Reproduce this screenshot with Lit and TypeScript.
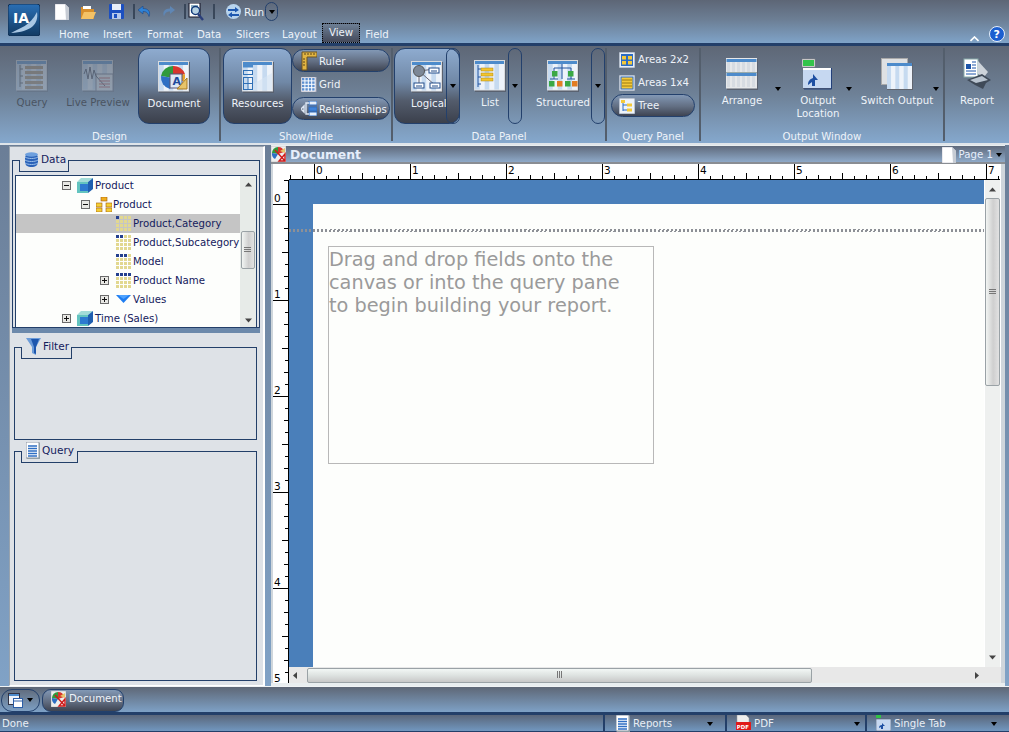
import { LitElement, html, css, svg } from "lit";
import { customElement } from "lit/decorators.js";

const S = (w: number, h: number, body: unknown) =>
  html`<svg width=${w} height=${h} viewBox="0 0 ${w} ${h}" style="display:block;flex:none">${body}</svg>`;

const stripes = (x: number, y: number, w: number, h: number, n = 6) =>
  Array.from({ length: n }, (_, i) =>
    svg`<rect x=${x + (i * w) / n} y=${y} width=${w / n} height=${h} fill=${i % 2 ? "#eef3fa" : "#c6daf0"}/>`);

const win = (inner: unknown = "", sc = true) => S(32, 32, svg`
  <rect x="1" y="1" width="31" height="31" fill="#5a6270"/>
  <rect x="0" y="0" width="31" height="30.5" fill="#d8dadd"/>
  <rect x="1" y="1" width="29" height="28.5" fill="#eef3fa"/>
  ${sc ? stripes(1, 4, 29, 25.5) : ""}
  <rect x="1" y="1" width="29" height="3" fill="#4d8bcb"/>
  ${inner}`);

const icons = {
  query: win(svg`<g stroke="#444" stroke-width="1" fill="none">
    <path d="M4 5v22M4 9h3M4 16h3M4 23h3"/></g>
    ${[6, 11, 16, 21, 26].map((y) => svg`<rect x="9" y=${y} width="18" height="3" fill="#a5845a"/>`)}`),
  live: win(svg`<rect x="14" y="14" width="17" height="17" fill="#eee" stroke="#667"/>
    <path d="M2 14l2-5 2 10 2-12 2 12 2-9 2 6 9 10" stroke="#334" fill="none"/>
    ${[18, 21, 24, 27].map((y) => svg`<path d="M17 ${y}h11" stroke="#b44"/>`)}`),
  document: win(svg`<path d="M15 17 L3 15 A12 12 0 0 1 15 5 Z" fill="#2f9a3c"/>
    <path d="M15 17 V5 A12 12 0 0 1 27 13 Z" fill="#d8352c"/>
    <path d="M15 17 L27 13 A12 12 0 0 1 26 20 L15 20Z" fill="#e8a32a"/>
    <path d="M15 17 L3 15 A12 12 0 0 0 12 28 Z" fill="#2d6fc4"/>
    <rect x="12" y="13" width="12" height="14" fill="#dfe8f5" stroke="#557"/>
    <text x="14.5" y="24" font-size="11" font-weight="700" fill="#224a9a" font-family="Liberation Sans">A</text>
    <path d="M19 28 L29 17 L29 28Z" fill="#e8c46a" stroke="#a8781e"/>`),
  resources: win(svg`<rect x="1" y="4" width="10" height="2.5" fill="#4d8bcb"/>
    <path d="M1 29 L30 12V29Z" fill="#d6e4f3" opacity=".6"/>
    <g fill="none" stroke="#2f6fb5"><rect x="1.5" y="9.5" width="9" height="4" /><rect x="1.5" y="16.5" width="9" height="12"/><path d="M1.5 22.5h9M6 16.5v12"/></g>`),
  logical: win(svg`<path d="M8 10L24 8M8 10L8 25M8 10L25 25" stroke="#667" fill="none"/>
    <circle cx="8" cy="10" r="5.5" fill="#7c8796" stroke="#555"/>
    ${[[18, 7], [3, 22], [19, 22]].map(([x, y]) => svg`<rect x=${x} y=${y} width="10" height="5" fill="#fff" stroke="#234d8a"/><path d="M${x + 2} ${y + 3}h6" stroke="#234d8a"/>`)}`),
  list: win(svg`<path d="M4 5v22M4 9h3M4 17h3M4 24h3" stroke="#2355a0" fill="none"/>
    ${[8, 13, 18].map((y) => svg`<rect x="7" y=${y} width="12" height="3" fill="#f3c52f" stroke="#a98414" stroke-width=".5"/>`)}`),
  structured: win(svg`<path d="M15 4v4M7 8h17M7 8v3M24 8v3M7 16v3M24 16v3M3 19h8M20 19h8M15 8v11" stroke="#2355a0" fill="none"/>
    ${[[5, 11, "#3aa845"], [21, 11, "#3aa845"], [2, 21, "#3aa845"], [10, 21, "#e37e24"], [18, 21, "#3aa845"], [25, 21, "#e37e24"]].map(
      ([x, y, c]) => svg`<rect x=${x} y=${y} width="5.5" height="5.5" fill=${c as string}/>`)}`),
  arrange: S(32, 32, svg`<rect x="1" y="1" width="31" height="31" fill="#5a6270"/><rect width="31" height="30.5" fill="#e6e8ea"/>
    ${[0, 1, 2, 3, 4, 5].map((i) => svg`<rect x=${1 + i * 5} y="3" width="3" height="26" fill="#d7dce2"/>`)}
    <rect x="0.5" y="1" width="30" height="3" fill="#4d8bcb"/><rect x="0.5" y="15" width="30" height="3" fill="#4d8bcb"/><path d="M0 14.5h31" stroke="#9aa"/>`),
  output: S(32, 32, svg`<rect x="0" y="1" width="13" height="8" fill="#ddd" stroke="#888" stroke-width=".5"/><rect x="1" y="2" width="11" height="6" fill="#33c44a"/>
    <path d="M1 10h28v21H1z" fill="#5c6070"/>
    <rect x="1" y="10" width="28" height="20" fill="#c6d8f1"/><rect x="1" y="10" width="28" height="2" fill="#fff"/>
    <path d="M29.5 10v21H2" stroke="#23407a" fill="none"/>
    <path d="M11 16l5 6h-3v6h-3v-4l-4 3c0-4 2-6 5-7z" fill="#1e4fa2"/>`),
  sw: S(32, 32, svg`<rect x="0" y="0" width="27" height="27" fill="#aaa"/><rect x="1" y="1" width="25" height="25" fill="#dfe1e3"/>
    <rect x="6" y="5" width="26" height="27" fill="#60656f"/><rect x="6" y="5" width="25" height="26" fill="#eef3fa"/>
    ${stripes(6, 8, 25, 23)}<rect x="6" y="5" width="25" height="3" fill="#4d8bcb"/>`),
  report: S(30, 32, svg`<rect x="2" y="1" width="14" height="18" fill="#fff" stroke="#8aa"/>
    <rect x="4" y="6" width="5" height="5" fill="#1d55a8"/><path d="M10 4h4M10 7h4M10 10h4M4 13h10M4 16h10" stroke="#1d55a8"/>
    <path d="M16 3l10 11-4 5-6-3z" fill="#cdd3da"/><path d="M5 22l15-6 9 6-5 3-3 6-8-4z" fill="#3f4a58"/><path d="M8 22l12-4 6 4-12 3z" fill="#b9c4d0"/>`),
  ruler: S(16, 20, svg`<path d="M1 1h15v5H6v13H1z" fill="#e2b542" stroke="#6a5320"/><path d="M4 2v2M7 2v2M10 2v2M13 2v2M2 8h2M2 11h2M2 14h2" stroke="#5a451a"/>`),
  grid: S(16, 15, svg`<rect width="15" height="15" fill="#fff" stroke="#aab"/>${Array.from({ length: 16 }, (_, i) =>
    svg`<rect x=${1 + (i % 4) * 3.4} y=${1 + Math.floor(i / 4) * 3.4} width="2.4" height="2.4" fill="#5d8fd0"/>`)}`),
  rel: S(16, 15, svg`<rect x="8" y="0" width="8" height="4" fill="#e8f0fb" stroke="#2e6cc0"/><rect x="8" y="6" width="8" height="4" fill="#3f82d8" stroke="#2e6cc0"/><rect x="8" y="11" width="8" height="4" fill="#e8f0fb" stroke="#2e6cc0"/><path d="M8 2H5v11h3M0 8l3-3v6z" fill="none" stroke="#dfe8f5" stroke-width="1.4"/>`),
  a22: S(16, 16, svg`<rect width="16" height="16" fill="#e8eef7" stroke="#8894a6"/><rect x="2" y="2" width="12" height="12" fill="#2c6cc4"/><rect x="3" y="4" width="4" height="3.5" fill="#f4c93a"/><rect x="9" y="4" width="4" height="3.5" fill="#f4c93a"/><rect x="3" y="9" width="4" height="3.5" fill="#f4c93a"/><rect x="9" y="9" width="4" height="3.5" fill="#f4c93a"/>`),
  a14: S(16, 16, svg`<rect width="16" height="16" fill="#e8eef7" stroke="#8894a6"/><rect x="2" y="2" width="12" height="12" fill="#f4c93a" stroke="#2c6cc4"/><path d="M3 5h10M3 8h10M3 11h10" stroke="#9a7b15"/>`),
  tree: S(16, 16, svg`<rect width="16" height="16" fill="#eef3fa" stroke="#8894a6"/><path d="M4 4v9M4 7h4M4 12h4" stroke="#2c6cc4" fill="none"/><rect x="2" y="2" width="4" height="3" fill="#f4c93a"/><rect x="8" y="5.5" width="5" height="3" fill="#f4c93a"/><rect x="8" y="10.5" width="5" height="3" fill="#f4c93a"/>`),
  db: S(15, 15, svg`<rect x="1" y="1" width="13" height="14" rx="5" fill="#2a62b8"/><ellipse cx="7.5" cy="2.5" rx="6.5" ry="2.2" fill="#6ea0de"/><path d="M1 5c3 2 10 2 13 0M1 8c3 2 10 2 13 0M1 11c3 2 10 2 13 0" stroke="#9cc0ea" fill="none"/>`),
  funnel: S(15, 17, svg`<path d="M0 0h15l-5 9v8l-4-2V9z" fill="#6b9bd8"/><path d="M5 1h8l-3 8v7l-2-1V9z" fill="#1d56ad"/>`),
  doc: S(14, 17, svg`<rect x="1" y="1" width="13" height="16" fill="#9aa"/><rect width="13" height="16" fill="#fff" stroke="#8a94a2"/><path d="M2 4h9M2 6.5h9M2 9h9M2 11.5h9M2 14h9" stroke="#2f6fc4" stroke-width="1.4"/>`),
  cube: S(16, 15, svg`<path d="M0 4h11v11H0z" fill="#63c4c0"/><path d="M0 4l4-4h12l-5 4z" fill="#a2dcd8"/><path d="M11 4l5-4v11l-5 4z" fill="#1f5fb0"/><rect x="3" y="6" width="8" height="7" fill="#2d7ad0"/>`),
  hier: S(16, 15, svg`<rect x="5" y="0" width="6" height="4" fill="#f0ae1d" stroke="#a05a10" stroke-width=".6"/><rect x="0" y="6" width="6" height="4" fill="#f4cf35" stroke="#a05a10" stroke-width=".6"/><rect x="10" y="6" width="6" height="4" fill="#f4cf35" stroke="#a05a10" stroke-width=".6"/><rect x="0" y="11" width="6" height="4" fill="#f4cf35" stroke="#a05a10" stroke-width=".6"/><rect x="10" y="11" width="6" height="4" fill="#f4cf35" stroke="#a05a10" stroke-width=".6"/>`),
  values: S(15, 9, svg`<path d="M0 0h15L7.5 8z" fill="#1f7df0"/><path d="M2 0h11L7.5 4z" fill="#4fa3ff"/>`),
  newf: S(14, 16, svg`<path d="M0 0h10l4 4v12H0z" fill="#fff" stroke="#aab" stroke-width=".5"/><path d="M10 0l4 4v12h-3z" fill="#c7ccd4"/>`),
  open: S(16, 14, svg`<path d="M1 2h6l1 2h6v10H1z" fill="#d88f2c"/><path d="M1 14l3-7h12l-3 7z" fill="#f4c266"/><path d="M3 1h8v3H3z" fill="#fff"/>`),
  save: S(15, 15, svg`<rect width="15" height="15" rx="1" fill="#1c4fc0"/><rect x="3" y="0" width="9" height="6" fill="#e8eef8"/><rect x="3" y="9" width="9" height="6" fill="#b6c8ea"/><rect x="5" y="10" width="3" height="4" fill="#1c4fc0"/>`),
  undo: S(13, 12, svg`<path d="M5 0L0 4l5 4V5.5c3 0 5 1 6 5 2-5-1-8-6-8z" fill="#2f82d6" stroke="#163f7c" stroke-width=".5"/>`),
  redo: S(13, 12, svg`<path d="M8 0l5 4-5 4V5.5c-3 0-5 1-6 5-2-5 1-8 6-8z" fill="#5f86b4"/>`),
  preview: S(16, 18, svg`<rect x="1" y="0" width="11" height="14" fill="#fff" stroke="#112"/><path d="M3 3h7M3 5h7M3 7h7M3 9h7" stroke="#268"/><circle cx="7.5" cy="7.5" r="4" fill="#cfe6f7" fill-opacity=".6" stroke="#123a7a" stroke-width="1.5"/><path d="M10 11l5 6" stroke="#2a3e7a" stroke-width="2.4"/>`),
  run: S(15, 15, svg`<circle cx="7.5" cy="7.5" r="7.5" fill="#b8d4ee"/><path d="M2 5h7V3l4 3-4 2.5V7H2z" fill="#1e58b0"/><path d="M13 10H6V8l-4 3 4 2.5V12h7z" fill="#1e58b0"/>`),
  help: S(16, 16, svg`<circle cx="8" cy="8" r="7.5" fill="#1c5fd0" stroke="#e8f0fb"/><text x="4.5" y="12" font-size="11" font-weight="700" fill="#fff">?</text>`),
  chev: S(9, 6, svg`<path d="M0.5 5L4.5 1l4 4" fill="none" stroke="#fff" stroke-width="1.6"/>`),
  tabs: S(15, 15, svg`<rect x=".5" y=".5" width="11" height="11" fill="#eef3fa" stroke="#334"/><rect x="1" y="1" width="10" height="2" fill="#4d8bcb"/><rect x="5.5" y="5.5" width="9" height="9" fill="#fff" stroke="#2b5da6"/><path d="M6 8h8" stroke="#2b5da6"/>`),
  pdf: S(15, 16, svg`<path d="M1 0h9l3 3v6H1z" fill="#eee" stroke="#999" stroke-width=".5"/><rect x="0" y="7" width="15" height="8" fill="#e01a1a"/><text x=".8" y="13.5" font-size="5.4" font-weight="700" fill="#fff">PDF</text>`),
  single: S(15, 16, svg`<rect x="0" y="0" width="5" height="3" fill="#31c144"/><rect x="0" y="4" width="15" height="12" fill="#c6d8f1" stroke="#54606f" stroke-width=".6"/><path d="M6 8l3 3H7v3H5v-2l-2 1c0-2 1-3 3-3z" fill="#1e4fa2"/>`),
};

const docSmall = S(15, 16, svg`<rect width="15" height="16" fill="#eee" stroke="#aaa" stroke-width=".5"/>
  <path d="M7 8L1 7a6 6 0 0 1 6-6z" fill="#2f9a3c"/><path d="M7 8V1a6 6 0 0 1 6 5z" fill="#d8352c"/><path d="M7 8L1 7a6 6 0 0 0 3 6z" fill="#2d6fc4"/>
  <path d="M4 4l10 11M14 8v7H8z" stroke="#d01a1a" fill="none" stroke-width="1.4"/><path d="M9 5l5-3v5z" fill="#e8c46a"/>`);

const lvl = (n: number) => S(16, 16, Array.from({ length: 16 }, (_, i) =>
  svg`<rect x=${(i % 4) * 4} y=${Math.floor(i / 4) * 4} width="3" height="3" fill=${i < n ? "#24408f" : "#e2d890"}/>`));
const plus = S(9, 9, svg`<rect x=".5" y=".5" width="8" height="8" fill="#e8e8e4" stroke="#6b6b6b"/><path d="M2 4.5h5M4.5 2v5" stroke="#111"/>`);
const minus = S(9, 9, svg`<rect x=".5" y=".5" width="8" height="8" fill="#e8e8e4" stroke="#6b6b6b"/><path d="M2 4.5h5" stroke="#111"/>`);

const treeRows = [
  { cls: "d1", exp: minus, icon: icons.cube, t: "Product" },
  { cls: "d2", exp: minus, icon: icons.hier, t: "Product" },
  { cls: "d3 sel", exp: null, icon: lvl(1), t: "Product,Category" },
  { cls: "d3", exp: null, icon: lvl(2), t: "Product,Subcategory" },
  { cls: "d3", exp: null, icon: lvl(3), t: "Model" },
  { cls: "d3", exp: plus, icon: lvl(4), t: "Product Name" },
  { cls: "d3", exp: plus, icon: icons.values, t: "Values" },
  { cls: "d1", exp: plus, icon: icons.cube, t: "Time (Sales)" },
];

const hRuler = () => {
  const out: unknown[] = [];
  for (let i = -2; i < 60; i++) {
    const x = 25 + i * 12;
    const h = i % 8 === 0 ? 16 : i % 4 === 0 ? 6 : i % 2 === 0 ? 4 : 3;
    out.push(svg`<rect x=${x} y=${15 - h} width="1" height=${h} fill="#000"/>`);
    if (i >= 0 && i % 8 === 0) out.push(svg`<text x=${x + 2} y="10" class="rt">${i / 8}</text>`);
  }
  return html`<svg class="hr" width="711" height="16" viewBox="0 0 711 16"><rect y="15" width="711" height="1" fill="#000"/>${out}</svg>`;
};
const vRuler = () => {
  const out: unknown[] = [];
  for (let i = -2; i < 41; i++) {
    const y = 24 + i * 12;
    const w = i % 8 === 0 ? 15 : i % 4 === 0 ? 6 : i % 2 === 0 ? 4 : 3;
    out.push(svg`<rect x=${15 - w} y=${y} width=${w} height="1" fill="#000"/>`);
    if (i >= 0 && i % 8 === 0) out.push(svg`<text x="1" y=${y - 2} class="rt">${i / 8}</text>`);
  }
  return html`<svg class="vr" width="16" height="506" viewBox="0 0 16 506"><rect x="15" width="1" height="506" fill="#000"/>${out}</svg>`;
};

const grip = (vertical: boolean) => S(8, 8, vertical
  ? svg`<path d="M0 1.5h7M0 3.5h7M0 5.5h7" stroke="#777"/>`
  : svg`<path d="M1.5 0v7M3.5 0v7M5.5 0v7" stroke="#777"/>`);
const tri = (d: string) => S(9, 9, svg`<path d=${d} fill="#444"/>`);
const UP = "M4.5 2.5L8 6.5H1z", DOWN = "M1 2.5h7L4.5 6.5z", LEFT = "M6 1v7L2 4.5z", RIGHT = "M3 1v7l4-3.5z";

@customElement("app-root")
export class AppRoot extends LitElement {
  static styles = css`
    :host { display: block; width: 1009px; height: 732px; overflow: hidden; font-family: "DejaVu Sans", Verdana, sans-serif; font-size: 10.2px; color: #14205c; background: linear-gradient(#65748a, #82a5ca); }
    .app { display: flex; flex-direction: column; height: 732px; }
    svg text { font-family: "DejaVu Sans", sans-serif; }
    .top { height: 43px; flex: none; background: linear-gradient(#5d6676, #6c7e94 45%, #7fa3c8); display: flex; color: #eef3f9; }
    .logo { margin: 4px 0 0 8px; width: 32px; height: 32px; flex: none; }
    .topcol { margin-left: 15px; flex: 1; display: flex; flex-direction: column; }
    .qa { height: 23px; display: flex; align-items: center; position: relative; }
    .qa > * { flex: none; }
    .qa .sep { width: 2px; height: 15px; background: #39475a; }
    .runpill { width: 13px; height: 19px; border: 1px solid #23406c; border-radius: 7px; display: flex; align-items: center; justify-content: center; box-sizing: border-box; margin-left: 1px; }
    .menu { display: flex; height: 20px; align-items: flex-end; padding-left: 4px; }
    .menu span { display: block; height: 19px; line-height: 21px; box-sizing: border-box; text-align: center; flex: none; }
    .menu .on { height: 20px; line-height: 17px; border: 1px dotted #000; background: linear-gradient(#6d7f95, #44495a); }
    .topright { display: flex; align-items: flex-end; gap: 10px; padding: 0 4px 1px 0; }
    .line { height: 3px; background: #233f69; flex: none; }
    .ribbon { height: 97px; flex: none; display: flex; background: linear-gradient(#5e6776, #6e8197 50%, #85a8cd); color: #eef3f9; }
    .group { display: flex; flex-direction: column; box-sizing: border-box; border-right: 2px solid #535e6c; margin: 2px 0; }
    .g1 { width: 221px; } .g2 { width: 172px; } .g3 { width: 214px; } .g4 { width: 94px; } .g5 { width: 244px; } .g6 { flex: 1; border: 0; }
    .body { height: 80px; display: flex; flex: none; }
    .cap { flex: 1; text-align: center; line-height: 15px; padding-top: 1px; color: #eef3f9; }
    .big { display: flex; flex-direction: column; align-items: center; padding-top: 12px; box-sizing: border-box; flex: none; }
    .big .lb { margin-top: 4px; line-height: 14px; text-align: center; white-space: nowrap; }
    .big.dis { color: #4a5462; } .big.dis svg { opacity: .28; }
    .big.on { height: 76px; border: 1px solid #23406c; border-radius: 11px; background: linear-gradient(#8eabcf, #7088a6 45%, #535c6c 70%, #3b404c); }
    .logical { align-items: flex-start; padding-left: 16px; position: relative; }
    .logical .lb { width: 32px; }
    .drop { width: 14px; height: 76px; box-sizing: border-box; border: 1px solid #23406c; border-radius: 7px; flex: none; display: flex; align-items: center; justify-content: center; }
    .logical .drop { position: absolute; right: -1px; top: -1px; }
    .darr { align-self: flex-start; margin: 36px 0 0 -10px; }
    .arr { width: 0; height: 0; border: 3px solid transparent; border-top: 4px solid #000; border-bottom: 0; flex: none; }
    .small { display: flex; align-items: center; gap: 2px; box-sizing: border-box; border: 1px solid transparent; white-space: nowrap; flex: none; }
    .small.on { border-color: #23406c; border-radius: 12px; background: linear-gradient(#8298b5, #626e82 55%, #3e4452); }
    .stack { display: flex; flex-direction: column; flex: none; }
    .sh { padding-top: 1px; }
    .sh .small { width: 98px; height: 23px; padding-left: 8px; margin-bottom: 1px; }
    .sh .small.on { padding-top: 1px; }
    .sh .small.on svg { margin-top: -1px; }
    .qp { margin: 0 0 0 4px; }
    .qp .small { width: 84px; height: 23px; padding-left: 7px; gap: 3px; }
    .qp .small.on { margin-top: 0; }
    .out .big { padding-top: 10px; }
    .out .lb { line-height: 13px; }
    .out .oarr { align-self: flex-start; margin-top: 39px; }
    .main { flex: 1; display: flex; min-height: 0; border-top: 2px solid #dfe5ea; }
    .side { margin: 1px 6px 0 9px; width: 256px; box-sizing: border-box; background: #dee2e7; border-left: 1px solid #98a3ae; border-right: 2px solid #fff; border-top: 1px solid #98a3ae; border-bottom: 1px solid #fff; display: flex; flex-direction: column; padding: 13px 6px 0 2px; flex: none; }
    .frame { border: 1px solid #233f69; position: relative; box-sizing: border-box; flex: none; }
    .tab { position: absolute; left: 6px; top: -1px; height: 11px; border: 1px solid #233f69; border-top: 0; background: #dee2e7; box-sizing: content-box; }
    .tabhead { position: absolute; left: 11px; top: -12px; display: flex; align-items: center; gap: 2px; height: 20px; font-size: 10.5px; color: #14205c; }
    .data { height: 168px; padding: 14px 2px 1px 2px; box-shadow: 0 5px 0 #6c89ab; margin: 0 -3px 19px 0; }
    .treebox { height: 151px; border: 1px solid #233f69; background: #fdfefc; display: flex; overflow: hidden; }
    .tree { flex: 1; min-width: 0; }
    .row { height: 19px; display: flex; align-items: center; white-space: nowrap; position: relative; }
    .row .txt { margin-left: 2px; color: #14205c; }
    .exp { width: 9px; flex: none; }
    .d1 { padding-left: 46px; } .d2 { padding-left: 65px; } .d3 { padding-left: 84px; }
    .d1 .ic, .d2 .ic { margin-left: 6px; } .d3 .ic { margin-left: 7px; }
    .d2 .txt, .d3 .txt { margin-left: 1px; }
    .row .ic { width: 16px; flex: none; display: flex; align-items: center; }
    .sel { background: #c5c5c5; }
    .sb { width: 16px; flex: none; background: #e7ebe8; display: flex; flex-direction: column; align-items: center; box-sizing: border-box; }
    .thumbv { box-sizing: border-box; border: 1px solid #9aa2a6; border-radius: 2px; background: linear-gradient(90deg, #f2f5f3, #cfcfcf 55%, #e2e2e2); display: flex; align-items: center; justify-content: center; flex: none; }
    .filter { height: 93px; margin: 0 0 11px 2px; }
    .query { height: 230px; margin-left: 2px; }
    .doc { flex: 1; min-width: 0; display: flex; flex-direction: column; padding: 1px 0 3px; margin-right: 4px; background: #e9eef0; }
    .dochead { height: 16px; flex: none; background: linear-gradient(#5f6a7c, #8ea9c8); border-bottom: 2px solid #898d93; display: flex; align-items: center; color: #e6eefb; }
    .dtitle { font: 700 12.4px "DejaVu Sans", sans-serif; margin-left: 4px; flex: 1; }
    .page { display: flex; align-items: center; gap: 3px; padding-right: 3px; font-size: 10.2px; margin-top: 1px; }
    .docbody { flex: 1; min-height: 0; display: flex; padding: 0 4px 0 2px; background: #cfd6dc; }
    .lrail { width: 16px; background: #fff; flex: none; display: flex; flex-direction: column; overflow: hidden; }
    .corner { height: 16px; flex: none; }
    .rt { font-size: 10.5px; fill: #000; }
    .hr, .vr { display: block; flex: none; }
    .right { flex: 1; min-width: 0; display: flex; flex-direction: column; background: #fff; }
    .hrow { height: 16px; flex: none; overflow: hidden; }
    .mid { flex: 1; min-height: 0; display: flex; }
    .canvas { width: 695px; box-sizing: border-box; flex: none; background: #4a7fba; padding: 24px 0 0 24px; overflow: hidden; }
    .paper { height: 100%; background: #fdfefc; padding-top: 25px; }
    .dash { height: 3px; margin: 0 0 0 -24px; background: repeating-linear-gradient(100deg, #8d9096 0 2px, transparent 2px 4px); position: relative; }
    .dropbox { margin: 14px 0 0 15px; width: 326px; height: 218px; box-sizing: border-box; border: 1px solid #b8b8b8; padding: 1px 0 0 0; font: 19.3px/23px "DejaVu Sans", sans-serif; color: #9a9a9a; white-space: nowrap; }
    .vsb { width: 15px; background: #eef0ef; display: flex; flex-direction: column; align-items: center; flex: none; margin-left: 1px; }
    .hbar { height: 16px; flex: none; display: flex; align-items: center; background: #e8e8e8; }
    .thumbh { box-sizing: border-box; height: 15px; border: 1px solid #9aa2a6; border-radius: 2px; background: linear-gradient(#f2f7f5, #dde2e0 50%, #c8c8c8); display: flex; align-items: center; justify-content: center; flex: none; }
    .tabsbar { height: 26px; flex: none; background: linear-gradient(#5e6776, #7ea1c6); display: flex; align-items: center; gap: 2px; padding: 1px 0 0 1px; box-sizing: border-box; color: #eef3f9; border-top: 1px solid #f0f3f5; }
    .tb0 { width: 39px; height: 23px; box-sizing: border-box; border: 1px solid #23406c; border-radius: 11px; display: flex; align-items: center; justify-content: center; gap: 4px; }
    .tb1 { width: 82px; height: 23px; box-sizing: border-box; border: 1px solid #23406c; border-radius: 9px; background: linear-gradient(#8298b5, #626e82 55%, #3e4452); display: flex; align-items: center; gap: 3px; padding: 0 0 3px 8px; }
    .status { height: 20px; flex: none; display: flex; border-top: 3px solid #233f69; box-sizing: border-box; color: #e8eef5; background: #233f69; gap: 2px; }
    .st { background: linear-gradient(#5a667a, #7197bf); display: flex; align-items: center; box-sizing: border-box; border-bottom: 1px solid #233f69; }
    .st .grow { flex: 1; }
    .s0 { width: 603px; padding-left: 2px; } .s1 { width: 120px; padding: 0 12px 0 11px; } .s2 { width: 138px; padding: 0 5px 0 9px; } .s3 { width: 142px; padding: 0 12px 0 9px; }
    .st .arr { margin-top: 1px; }
    .st svg { margin-right: 3px; }
  `;

  render() {
    return html`<div class="app">
      <div class="top">
        <div class="logo">${S(32, 32, svg`
          <defs><linearGradient id="lg" x1="0" y1="0" x2="0" y2="1"><stop offset="0" stop-color="#2a6fb5"/><stop offset="1" stop-color="#123a62"/></linearGradient></defs>
          <rect width="32" height="32" rx="3" fill="url(#lg)" stroke="#0f2f55"/>
          <path d="M3 29C12 24 22 22 29 8c2 12-6 20-26 21z" fill="#a9c7e4"/>
          <text x="5" y="19" font-size="14" font-weight="700" fill="#fff">IA</text>`)}</div>
        <div class="topcol">
          <div class="qa">
            ${icons.newf}
            <span style="width:11px"></span>${icons.open}
            <span style="width:13px"></span>${icons.save}
            <span style="width:9px"></span><span class="sep"></span>
            <span style="width:3px"></span>${icons.undo}
            <span style="width:11px"></span>${icons.redo}
            <span style="width:9px"></span><span class="sep"></span>
            <span style="width:2px"></span>${icons.preview}
            <span style="width:9px"></span><span class="sep"></span>
            <span style="width:11px"></span>${icons.run}
            <span style="margin-left:3px;font-size:10.5px">Run</span>
            <span class="runpill"><i class="arr"></i></span>
          </div>
          <div class="menu">
            ${[["Home", 0, 28], ["Insert", 43, 31], ["Format", 88, 36], ["Data", 138, 24], ["Slicers", 177, 32], ["Layout", 223, 34]].map(
              ([t, , w], i, a) => html`<span style="width:${w}px;margin-left:${i ? (a[i][1] as number) - (a[i - 1][1] as number) - (a[i - 1][2] as number) : 0}px">${t}</span>`)}
            <span class="on" style="width:38px;margin-left:6px">View</span>
            <span style="width:24px;margin-left:5px">Field</span>
            <span style="flex:1"></span>
          </div>
        </div>
        <div class="topright">${icons.chev}${icons.help}</div>
      </div>
      <div class="line"></div>
      <div class="ribbon">
        <div class="group g1"><div class="body">
          <div class="big dis" style="width:64px">${icons.query}<div class="lb">Query</div></div>
          <div class="big dis" style="width:68px">${icons.live}<div class="lb">Live Preview</div></div>
          <div class="big on" style="width:72px;margin-left:6px">${icons.document}<div class="lb">Document</div></div>
        </div><div class="cap">Design</div></div>
        <div class="group g2"><div class="body">
          <div class="big on" style="width:69px;margin-left:2px">${icons.resources}<div class="lb">Resources</div></div>
          <div class="stack sh">
            <div class="small on">${icons.ruler}Ruler</div>
            <div class="small">${icons.grid}Grid</div>
            <div class="small on">${icons.rel}Relationships</div>
          </div>
        </div><div class="cap">Show/Hide</div></div>
        <div class="group g3"><div class="body">
          <div class="big on logical" style="width:66px;margin-left:1px">
            ${icons.logical}<div class="lb">Logical</div>
            <div class="drop"><i class="arr"></i></div>
          </div>
          <div class="big" style="width:60px">${icons.list}<div class="lb">List</div></div>
          <div class="drop" style="margin-left:-12px"></div>
          <i class="arr darr"></i>
          <div class="big" style="width:64px;margin-left:13px">${icons.structured}<div class="lb">Structured</div></div>
          <div class="drop" style="margin-left:-4px"></div>
          <i class="arr darr"></i>
        </div><div class="cap">Data Panel</div></div>
        <div class="group g4"><div class="body">
          <div class="stack qp">
            <div class="small">${icons.a22}Areas 2x2</div>
            <div class="small">${icons.a14}Areas 1x4</div>
            <div class="small on">${icons.tree}Tree</div>
          </div>
        </div><div class="cap">Query Panel</div></div>
        <div class="group g5"><div class="body out">
          <div class="big" style="width:60px;margin-left:11px">${icons.arrange}<div class="lb">Arrange</div></div>
          <i class="arr oarr" style="margin-left:3px"></i>
          <div class="big" style="width:52px;margin-left:11px">${icons.output}<div class="lb">Output<br />Location</div></div>
          <i class="arr oarr" style="margin-left:2px"></i>
          <div class="big" style="width:68px;margin-left:11px">${icons.sw}<div class="lb">Switch Output</div></div>
          <i class="arr oarr" style="margin-left:2px"></i>
        </div><div class="cap">Output Window</div></div>
        <div class="group g6"><div class="body out">
          <div class="big" style="width:64px">${icons.report}<div class="lb">Report</div></div>
        </div></div>
      </div>
      <div class="main">
        <div class="side">
          <div class="frame data">
            <div class="tab" style="width:48px"></div>
            <div class="tabhead">${icons.db}<span>Data</span></div>
            <div class="treebox">
              <div class="tree">
                ${treeRows.map((r) => html`<div class="row ${r.cls}"><span class="exp">${r.exp}</span><span class="ic">${r.icon}</span><span class="txt">${r.t}</span></div>`)}
              </div>
              <div class="sb">
                <div style="height:4px"></div>${tri(UP)}
                <div style="height:42px"></div>
                <div class="thumbv" style="width:14px;height:38px">${grip(true)}</div>
                <div style="flex:1"></div>${tri(DOWN)}<div style="height:2px"></div>
              </div>
            </div>
          </div>
          <div class="frame filter">
            <div class="tab" style="width:49px"></div>
            <div class="tabhead">${icons.funnel}<span>Filter</span></div>
          </div>
          <div class="frame query">
            <div class="tab" style="width:55px"></div>
            <div class="tabhead">${icons.doc}<span>Query</span></div>
          </div>
        </div>
        <div class="doc">
          <div class="dochead">${docSmall}<span class="dtitle">Document</span>
            <div class="page">${icons.newf}<span>Page 1</span><i class="arr"></i></div>
          </div>
          <div class="docbody">
            <div class="lrail"><div class="corner"></div>${vRuler()}</div>
            <div class="right">
              <div class="hrow">${hRuler()}</div>
              <div class="mid">
                <div class="canvas"><div class="paper">
                  <div class="dash"></div>
                  <div class="dropbox">Drag and drop fields onto the<br />canvas or into the query pane<br />to begin building your report.</div>
                </div></div>
                <div class="vsb">
                  <div style="height:5px"></div>${tri(UP)}<div style="height:4px"></div>
                  <div class="thumbv" style="width:15px;height:188px">${grip(true)}</div>
                  <div style="flex:1"></div>${tri(DOWN)}<div style="height:5px"></div>
                </div>
              </div>
              <div class="hbar">
                <span style="width:2px"></span>${tri(LEFT)}<span style="width:7px"></span>
                <div class="thumbh" style="width:505px">${grip(false)}</div>
                <span style="flex:1"></span>${tri(RIGHT)}<span style="width:20px"></span>
              </div>
            </div>
          </div>
        </div>
      </div>
      <div class="tabsbar">
        <div class="tb0">${icons.tabs}<i class="arr"></i></div>
        <div class="tb1">${docSmall}<span>Document</span></div>
      </div>
      <div class="status">
        <div class="st s0">Done</div>
        <div class="st s1">${icons.doc}<span>Reports</span><span class="grow"></span><i class="arr"></i></div>
        <div class="st s2">${icons.pdf}<span>PDF</span><span class="grow"></span><i class="arr"></i></div>
        <div class="st s3">${icons.single}<span>Single Tab</span><span class="grow"></span><i class="arr"></i></div>
      </div>
    </div>`;
  }
}
